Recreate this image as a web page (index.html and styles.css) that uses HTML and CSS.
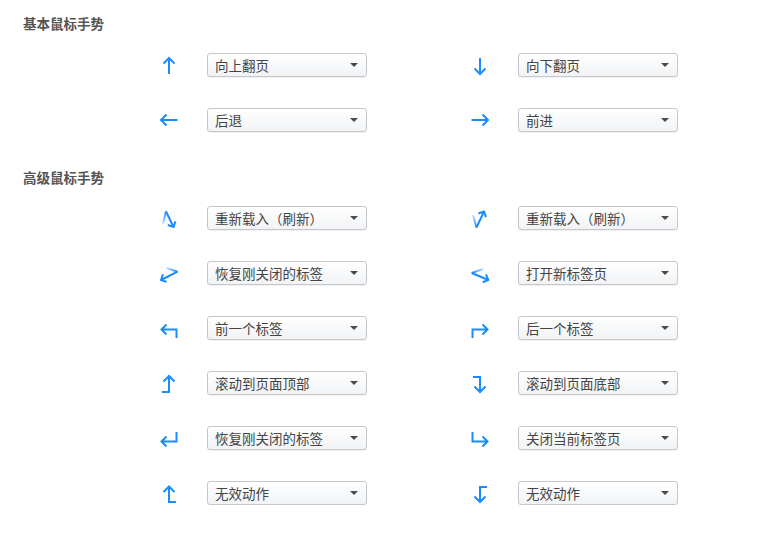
FILE: index.html
```html
<!DOCTYPE html>
<html lang="zh-CN">
<head>
<meta charset="utf-8">
<title>鼠标手势</title>
<link rel="stylesheet" href="styles.css">
</head>
<body>
<div class="page">
  <section class="group">
    <h2 class="group-title">基本鼠标手势</h2>
    <div class="grid">
      <div class="item">
        <span class="icon"><svg class="gi" viewBox="0 0 20 20"><path d="M10 18V2M4.5 7.5L10 2l5.5 5.5"/></svg></span>
        <div class="select"><span class="label">向上翻页</span><i class="caret"></i></div>
      </div>
      <div class="item">
        <span class="icon"><svg class="gi" viewBox="0 0 20 20"><path d="M10 2v16M4.5 12.5L10 18l5.5-5.5"/></svg></span>
        <div class="select"><span class="label">向下翻页</span><i class="caret"></i></div>
      </div>
      <div class="item">
        <span class="icon"><svg class="gi" viewBox="0 0 20 20"><path d="M2 9h16.5M7.5 3.5L2 9l5.5 5.5"/></svg></span>
        <div class="select"><span class="label">后退</span><i class="caret"></i></div>
      </div>
      <div class="item">
        <span class="icon"><svg class="gi" viewBox="0 0 20 20"><path d="M1.5 9H18M12.5 3.5L18 9l-5.5 5.5"/></svg></span>
        <div class="select"><span class="label">前进</span><i class="caret"></i></div>
      </div>
    </div>
  </section>

  <section class="group group-adv">
    <h2 class="group-title">高级鼠标手势</h2>
    <div class="grid">
      <div class="item">
        <span class="icon"><svg class="gi" viewBox="0 0 20 20">
          <defs><linearGradient id="g1" gradientUnits="userSpaceOnUse" x1="4" y1="15" x2="7" y2="2.5"><stop offset="0" stop-color="#1a8cff" stop-opacity="0.25"/><stop offset="1" stop-color="#1a8cff"/></linearGradient></defs>
          <path class="fade" stroke="url(#g1)" d="M4 15L7 2.5"/>
          <path d="M7 2.5l7.5 15.5M16.5 12.3l-2 5.7-5.7-2"/></svg></span>
        <div class="select"><span class="label">重新载入（刷新）</span><i class="caret"></i></div>
      </div>
      <div class="item">
        <span class="icon"><svg class="gi" viewBox="0 0 20 20">
          <defs><linearGradient id="g2" gradientUnits="userSpaceOnUse" x1="3" y1="6" x2="6.5" y2="18.5"><stop offset="0" stop-color="#1a8cff" stop-opacity="0.25"/><stop offset="1" stop-color="#1a8cff"/></linearGradient></defs>
          <path class="fade" stroke="url(#g2)" d="M3 6l3.5 12.5"/>
          <path d="M6.5 18.5L14 2.5M8.4 4.5L14 2.5l2 5.6"/></svg></span>
        <div class="select"><span class="label">重新载入（刷新）</span><i class="caret"></i></div>
      </div>

      <div class="item">
        <span class="icon"><svg class="gi" viewBox="0 0 20 20">
          <defs><linearGradient id="g3" gradientUnits="userSpaceOnUse" x1="7.5" y1="4" x2="18.5" y2="7.7"><stop offset="0" stop-color="#1a8cff" stop-opacity="0.25"/><stop offset="1" stop-color="#1a8cff"/></linearGradient></defs>
          <path class="fade" stroke="url(#g3)" d="M7.5 4l11 3.7"/>
          <path d="M18.5 7.7L2 16M7.7 17.9L2 16l1.9-5.7"/></svg></span>
        <div class="select"><span class="label">恢复刚关闭的标签</span><i class="caret"></i></div>
      </div>
      <div class="item">
        <span class="icon"><svg class="gi" viewBox="0 0 20 20">
          <defs><linearGradient id="g4" gradientUnits="userSpaceOnUse" x1="13.3" y1="5" x2="1.7" y2="9"><stop offset="0" stop-color="#1a8cff" stop-opacity="0.25"/><stop offset="1" stop-color="#1a8cff"/></linearGradient></defs>
          <path class="fade" stroke="url(#g4)" d="M13.3 5L1.7 9"/>
          <path d="M1.7 9l16.6 7M16 10.4l2.3 5.6-5.6 2.3"/></svg></span>
        <div class="select"><span class="label">打开新标签页</span><i class="caret"></i></div>
      </div>

      <div class="item">
        <span class="icon"><svg class="gi" viewBox="0 0 20 20"><path d="M17.5 19v-8.5H2.5M7.5 5.5l-5 5 5 5"/></svg></span>
        <div class="select"><span class="label">前一个标签</span><i class="caret"></i></div>
      </div>
      <div class="item">
        <span class="icon"><svg class="gi" viewBox="0 0 20 20"><path d="M2.5 19v-8.5h15M12.5 5.5l5 5-5 5"/></svg></span>
        <div class="select"><span class="label">后一个标签</span><i class="caret"></i></div>
      </div>

      <div class="item">
        <span class="icon"><svg class="gi" viewBox="0 0 20 20"><path d="M3 18h7V2M4.5 7.5L10 2l5.5 5.5"/></svg></span>
        <div class="select"><span class="label">滚动到页面顶部</span><i class="caret"></i></div>
      </div>
      <div class="item">
        <span class="icon"><svg class="gi" viewBox="0 0 20 20"><path d="M3 3h7v15M4.5 12.5L10 18l5.5-5.5"/></svg></span>
        <div class="select"><span class="label">滚动到页面底部</span><i class="caret"></i></div>
      </div>

      <div class="item">
        <span class="icon"><svg class="gi" viewBox="0 0 20 20"><path d="M17.5 3v9.5h-15M7.5 7.5l-5 5 5 5"/></svg></span>
        <div class="select"><span class="label">恢复刚关闭的标签</span><i class="caret"></i></div>
      </div>
      <div class="item">
        <span class="icon"><svg class="gi" viewBox="0 0 20 20"><path d="M2.5 3v9.5h15M12.5 7.5l5 5-5 5"/></svg></span>
        <div class="select"><span class="label">关闭当前标签页</span><i class="caret"></i></div>
      </div>

      <div class="item">
        <span class="icon"><svg class="gi" viewBox="0 0 20 20"><path d="M17 18h-7V2.5M4.5 8L10 2.5 15.5 8"/></svg></span>
        <div class="select"><span class="label">无效动作</span><i class="caret"></i></div>
      </div>
      <div class="item">
        <span class="icon"><svg class="gi" viewBox="0 0 20 20"><path d="M17 3h-7v15M4.5 12.5L10 18l5.5-5.5"/></svg></span>
        <div class="select"><span class="label">无效动作</span><i class="caret"></i></div>
      </div>
    </div>
  </section>
</div>
</body>
</html>
```

FILE: styles.css
```css
html, body {
  margin: 0;
  padding: 0;
  background: #ffffff;
}

body {
  font-family: "Noto Sans CJK SC", "Noto Sans", "Liberation Sans", sans-serif;
  color: #333333;
}

.page {
  padding-top: 13px;
}

.group-adv {
  margin-top: 35px;
}

.group-title {
  margin: 0 0 0 23px;
  font-size: 13.5px;
  line-height: 20px;
  font-weight: bold;
  color: #555555;
}

.grid {
  display: grid;
  grid-template-columns: 311px 311px;
  row-gap: 31px;
  padding-left: 157px;
  margin-top: 20px;
}

.group-adv .grid {
  margin-top: 19px;
}

.item {
  display: flex;
  align-items: flex-start;
  height: 24px;
}

.icon {
  width: 24px;
  height: 24px;
  margin-right: 26px;
  flex: none;
}

.gi {
  display: block;
  width: 20px;
  height: 20px;
  margin: 3px 2px 1px;
  fill: none;
  stroke: #1a8cff;
  stroke-width: 2;
  stroke-linejoin: miter;
  stroke-linecap: butt;
}

.select {
  box-sizing: border-box;
  width: 160px;
  height: 24px;
  display: flex;
  align-items: center;
  padding: 0 8px 0 7px;
  border: 1px solid #c4c7cc;
  border-radius: 3px;
  background: linear-gradient(#ffffff, #f1f3f5);
  box-shadow: 0 1px 1px rgba(0, 0, 0, 0.06);
}

.label {
  font-size: 13.5px;
  line-height: 20px;
  color: #444444;
  white-space: nowrap;
}

.caret {
  margin-left: auto;
  width: 0;
  height: 0;
  border-left: 4.5px solid transparent;
  border-right: 4.5px solid transparent;
  border-top: 4px solid #4a4a4a;
}
```
